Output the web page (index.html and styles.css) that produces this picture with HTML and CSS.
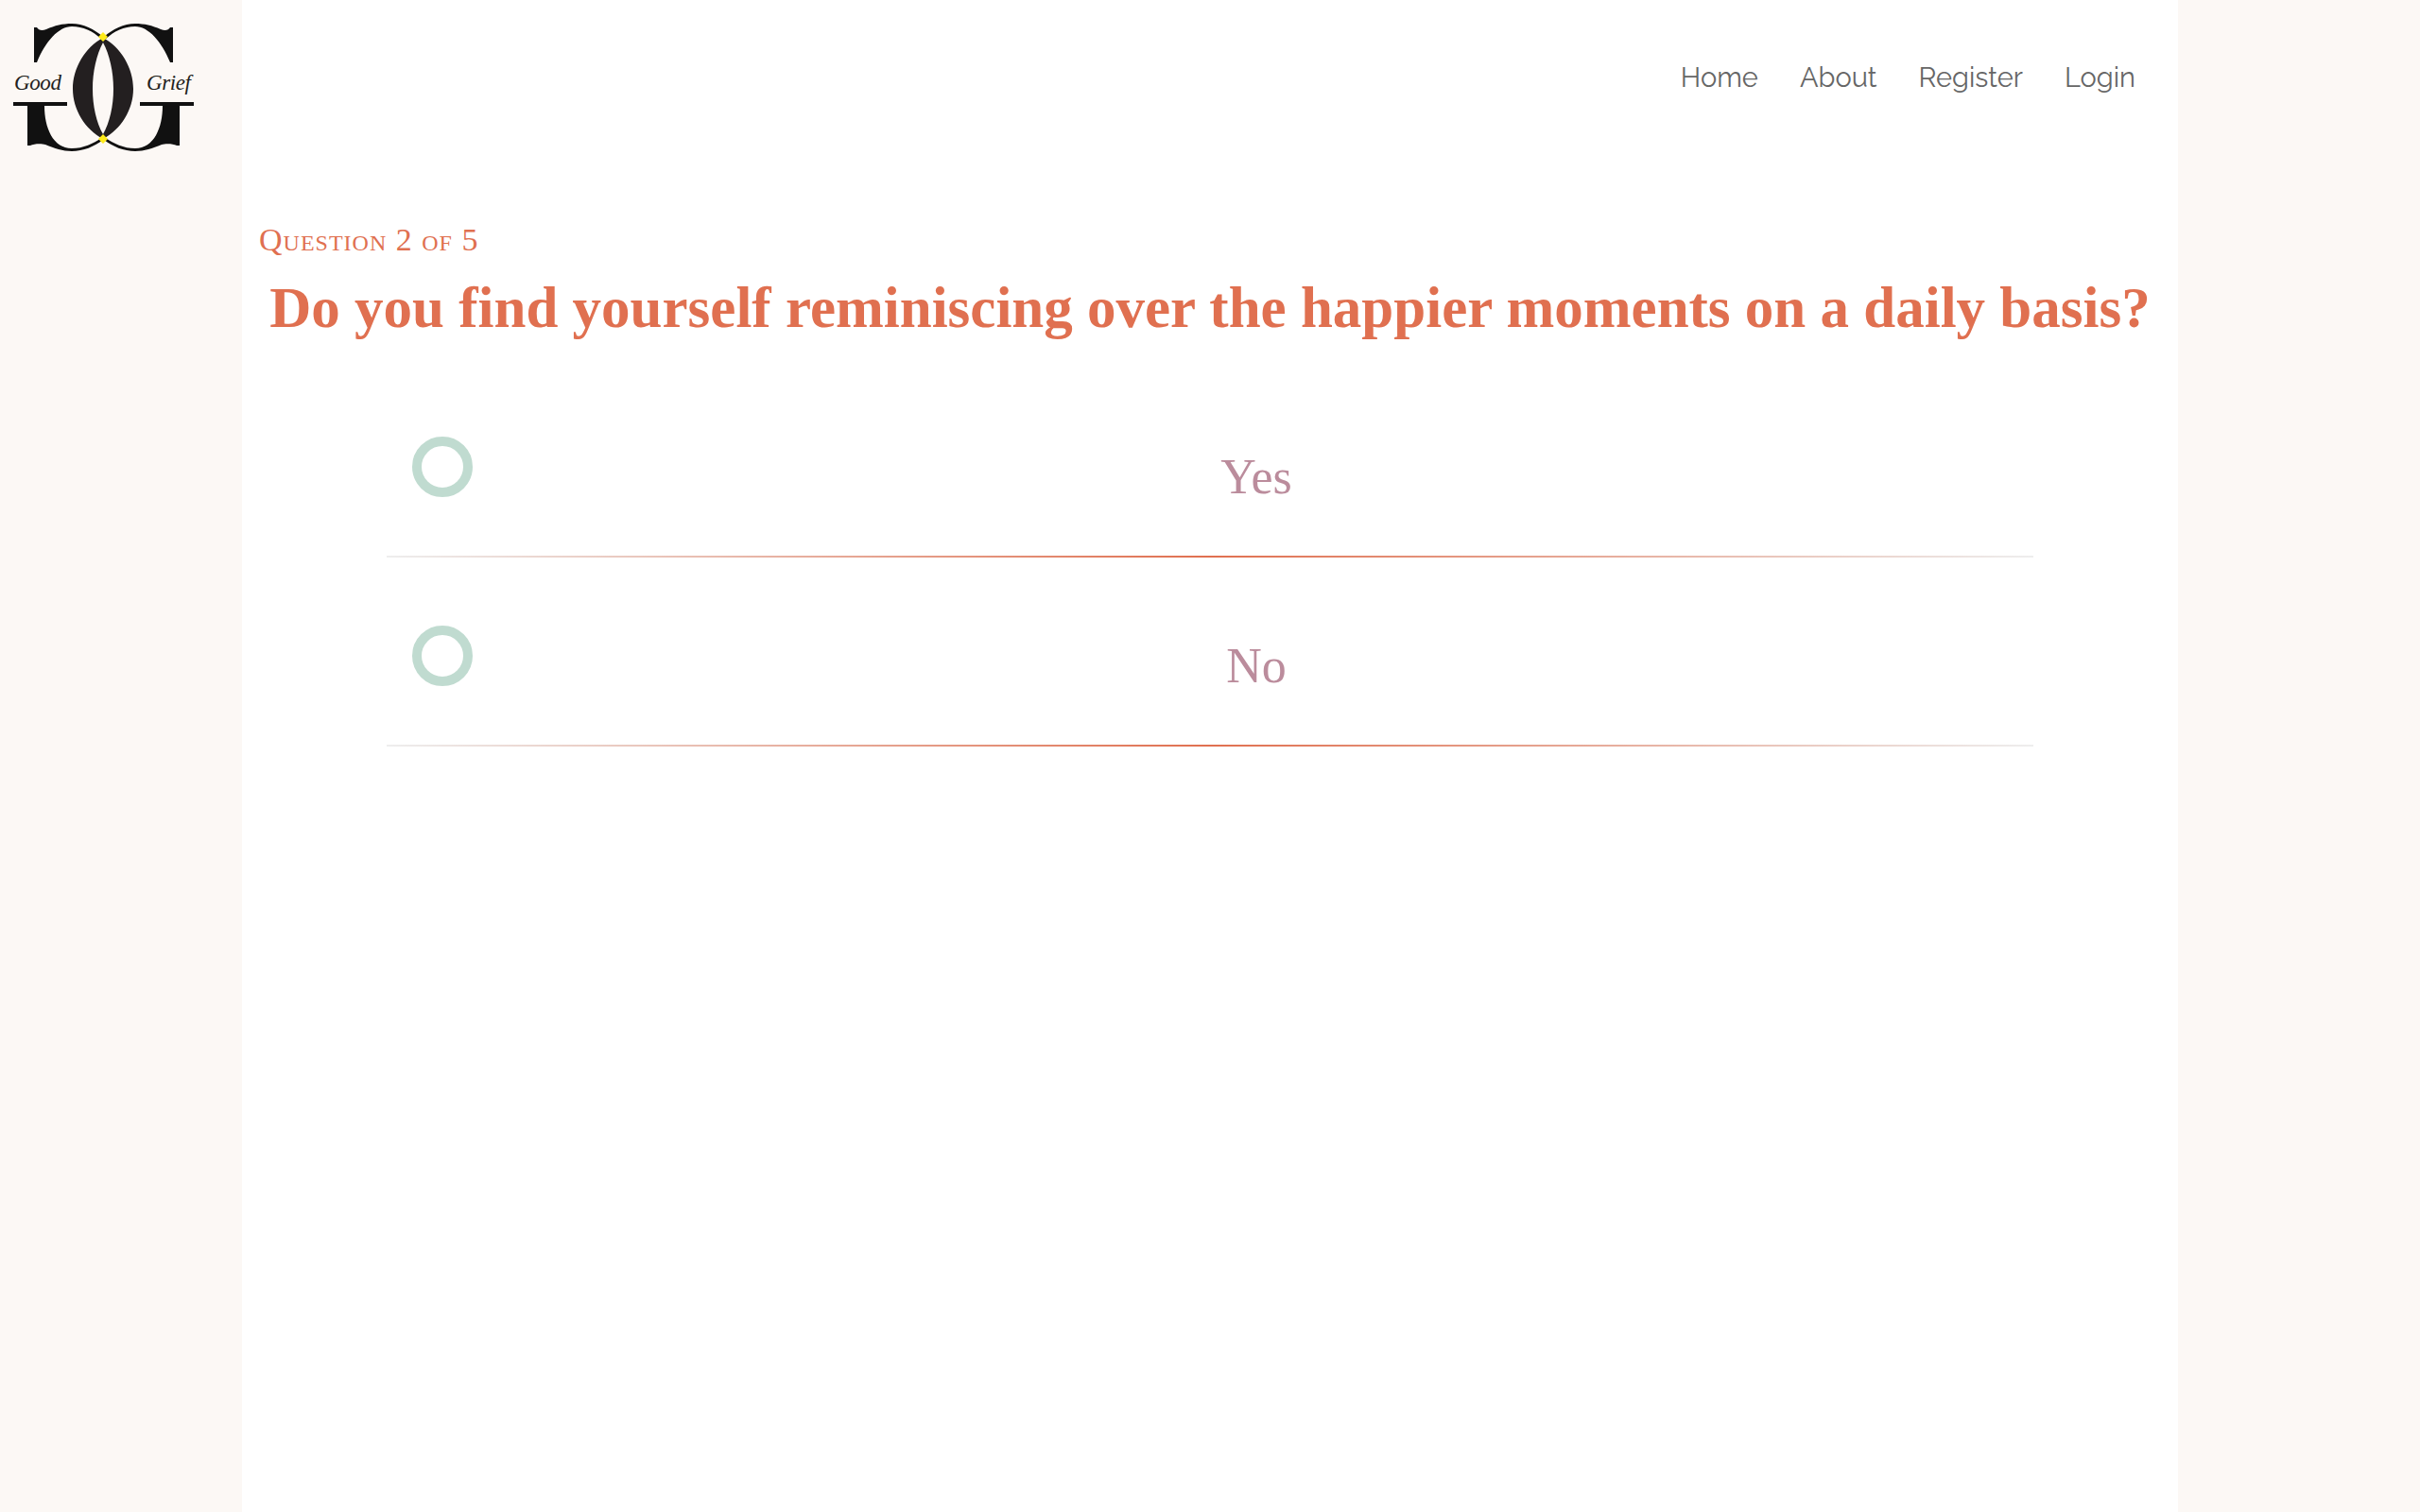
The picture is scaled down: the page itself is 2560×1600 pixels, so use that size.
FILE: index.html
```html
<!DOCTYPE html>
<html lang="en">
<head>
<meta charset="utf-8">
<title>Good Grief</title>
<link rel="stylesheet" href="styles.css">
</head>
<body>
<div class="logo">
  <svg class="logo-mark" viewBox="0 0 220 170" width="220" height="170">
    <path class="ink" fill-rule="evenodd" d="M109 40C128 50 141 72 141 94C141 116 128 137 109 147C90 137 77 116 77 94C77 72 90 50 109 40ZM109 45C116 58 120 76 120 94C120 112 116 130 109 142C102 130 98 112 98 94C98 76 102 58 109 45Z"/>
    <g id="half">
      <path class="ink-dark" d="M36 29L39 29C41 32 44 33 49 31C58 27 66 25 76 25C88 25 100 31 109 39L107 41C98 33 88 28 76 28C62 28 48 44 39 66L36 66Z"/>
      <path class="ink-dark" d="M14 108H71V112H47C47 135 56 157 76 157C88 157 99 152 107 146L109 148C100 155 88 160 76 160C66 160 58 157 48 153C44 152 36 152 32 154L29 154V112H14Z"/>
    </g>
    <use href="#half" transform="matrix(-1 0 0 1 219 0)"/>
    <path class="gold" d="M109 34l5 5-5 5-5-5zM109 142l5 5-5 5-5-5z"/>
    <text class="logo-word" x="15" y="95">Good</text>
    <text class="logo-word" x="155" y="95">Grief</text>
  </svg>
</div>
<div class="page">
  <nav class="nav">
    <a>Home</a><a>About</a><a>Register</a><a>Login</a>
  </nav>
  <p class="progress">Question 2 of 5</p>
  <h1 class="question">Do you find yourself reminiscing over the happier moments on a daily basis?</h1>
  <div class="answers">
    <div class="answer"><span class="radio"></span><span class="label">Yes</span></div>
    <div class="answer"><span class="radio"></span><span class="label">No</span></div>
  </div>
</div>
</body>
</html>
```
FILE: styles.css
```css
html,body{margin:0;height:100%}
body{background:#fcf8f5;font-family:"Liberation Serif",serif;position:relative;min-height:1600px}
.logo{position:absolute;left:0;top:0}
.logo-mark{display:block}
.ink{fill:#231f20}
.ink-dark{fill:#111}
.gold{fill:#ffeb1a}
.logo-word{font-family:"Liberation Serif",serif;font-style:italic;font-size:23px;letter-spacing:-.4px;fill:#231f20}
.page{width:2048px;min-height:1600px;margin:0 auto;background:#fff;box-sizing:border-box;padding:0 18px}
.nav{display:flex;justify-content:flex-end;gap:44px;padding:64px 27px 0 0;font-family:Raleway,"Noto Sans",sans-serif;font-size:29px;line-height:36px;color:#666}
.progress{margin:0;padding-top:134px;font-family:"Liberation Serif",serif;font-variant:small-caps;font-size:34px;line-height:40px;color:#e07050;letter-spacing:1px}
.question{margin:16px 0 0;text-align:center;font-family:"Liberation Serif",serif;font-weight:700;font-size:61px;line-height:72px;color:#e07050;white-space:nowrap}
.answers{width:1742px;margin:28px 0 0 135px}
.answer{height:200px;display:flex;box-sizing:border-box;position:relative;border-bottom:2px solid;border-image:linear-gradient(90deg,#eee,#e07050 50%,#eee) 1}
.radio{width:64px;height:64px;box-sizing:border-box;border:10px solid #c0dbd0;border-radius:50%;margin:72px 0 0 27px}
.label{position:absolute;left:0;right:0;top:82px;padding-left:98px;text-align:center;font-size:52px;line-height:66px;color:#bb8c9c}
```
